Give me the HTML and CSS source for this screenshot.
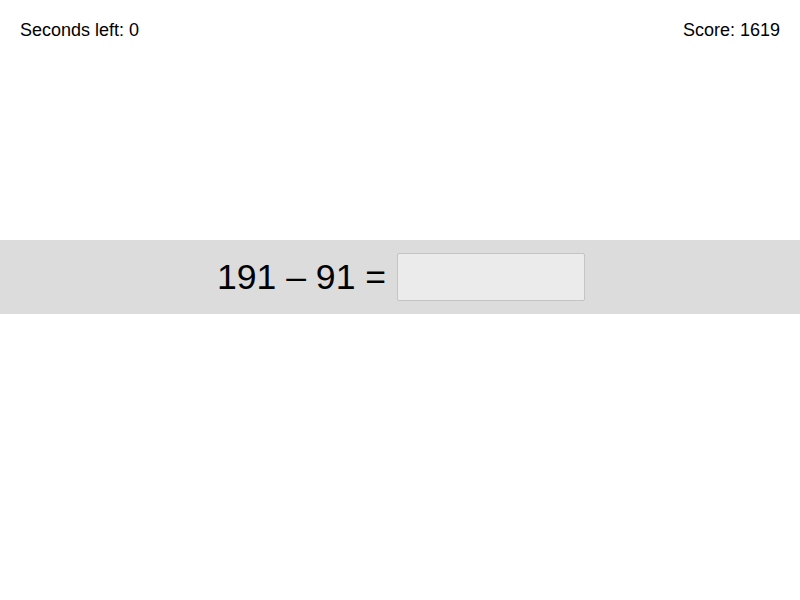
FILE: index.html
```html
<!DOCTYPE html>
<html>
<head>
<meta charset="utf-8">
<link rel="stylesheet" href="styles.css">
</head>
<body>
<div class="header">
  <span class="timer">Seconds left: 0</span>
  <span class="score">Score: 1619</span>
</div>
<div class="band">
  <span class="problem">191 – 91 =</span>
  <input class="answer" type="text">
</div>
</body>
</html>
```
FILE: styles.css
```css
html, body {
  margin: 0;
  padding: 0;
  background: #fff;
  font-family: "Liberation Sans", Arial, sans-serif;
  color: #000;
}
.header {
  display: flex;
  justify-content: space-between;
  padding: 20px;
  font-size: 18px;
  line-height: 20px;
}
.band {
  margin-top: 180px;
  background: #dcdcdc;
  display: flex;
  justify-content: center;
  align-items: center;
  gap: 11px;
  padding: 13px 0;
}
.problem {
  font-size: 35.6px;
  line-height: 48px;
  padding-left: 2px;
}
.answer {
  box-sizing: border-box;
  width: 188px;
  height: 48px;
  margin: 0;
  background: #ebebeb;
  border: 1px solid #c4c4c4;
  border-radius: 2px;
  font-size: 36px;
  font-family: "Liberation Sans", Arial, sans-serif;
  outline: none;
}
```
